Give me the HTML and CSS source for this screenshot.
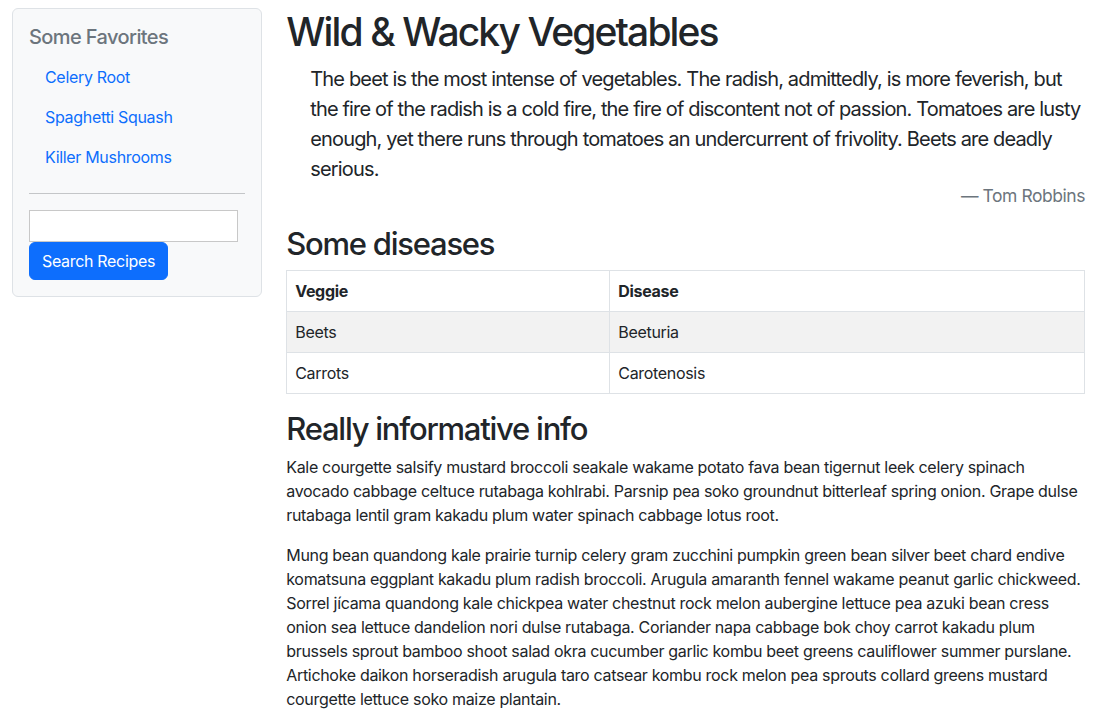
FILE: index.html
```html
<!DOCTYPE html>
<html lang="en">
<head>
<meta charset="utf-8">
<title>Wild &amp; Wacky Vegetables</title>
<link rel="stylesheet" href="styles.css">
</head>
<body>
<div class="page">
  <aside class="side-col">
    <div class="side-card">
      <h5 class="side-title">Some Favorites</h5>
      <nav class="side-nav">
        <a href="#" class="side-link">Celery Root</a>
        <a href="#" class="side-link">Spaghetti Squash</a>
        <a href="#" class="side-link">Killer Mushrooms</a>
      </nav>
      <hr class="side-rule">
      <form class="search-form">
        <input type="text" class="search-input">
        <button type="button" class="search-btn">Search Recipes</button>
      </form>
    </div>
  </aside>
  <main class="main-col">
    <h1 class="title">Wild &amp; Wacky Vegetables</h1>
    <blockquote class="quote">
      <p class="quote-text">The beet is the most intense of vegetables. The radish, admittedly, is more feverish, but the fire of the radish is a cold fire, the fire of discontent not of passion. Tomatoes are lusty enough, yet there runs through tomatoes an undercurrent of frivolity. Beets are deadly serious.</p>
      <footer class="quote-footer">— Tom Robbins</footer>
    </blockquote>
    <h2 class="section-title">Some diseases</h2>
    <table class="data-table">
      <thead>
        <tr><th>Veggie</th><th>Disease</th></tr>
      </thead>
      <tbody>
        <tr class="striped"><td>Beets</td><td>Beeturia</td></tr>
        <tr><td>Carrots</td><td>Carotenosis</td></tr>
      </tbody>
    </table>
    <h2 class="section-title">Really informative info</h2>
    <p class="body-text">Kale courgette salsify mustard broccoli seakale wakame potato fava bean tigernut leek celery spinach avocado cabbage celtuce rutabaga kohlrabi. Parsnip pea soko groundnut bitterleaf spring onion. Grape dulse rutabaga lentil gram kakadu plum water spinach cabbage lotus root.</p>
    <p class="body-text last">Mung bean quandong kale prairie turnip celery gram zucchini pumpkin green bean silver beet chard endive komatsuna eggplant kakadu plum radish broccoli. Arugula amaranth fennel wakame peanut garlic chickweed. Sorrel jícama quandong kale chickpea water chestnut rock melon aubergine lettuce pea azuki bean cress onion sea lettuce dandelion nori dulse rutabaga. Coriander napa cabbage bok choy carrot kakadu plum brussels sprout bamboo shoot salad okra cucumber garlic kombu beet greens cauliflower summer purslane. Artichoke daikon horseradish arugula taro catsear kombu rock melon pea sprouts collard greens mustard courgette lettuce soko maize plantain.</p>
  </main>
</div>
</body>
</html>
```

FILE: styles.css
```css
* { box-sizing: border-box; }

html, body {
  margin: 0;
  padding: 0;
}

body {
  font-family: Inter, "Noto Sans", "Liberation Sans", sans-serif;
  font-size: 16px;
  line-height: 1.5;
  letter-spacing: -0.02em;
  color: #212529;
  background: #fff;
}

.page {
  display: flex;
  padding-top: 8px;
}

.side-col {
  flex: 0 0 25%;
  padding: 0 12px;
}

.main-col {
  flex: 0 0 75%;
  padding: 0 12px;
  min-width: 0;
}

.side-card {
  background: #f8f9fa;
  border: 1px solid #dee2e6;
  border-radius: 6px;
  padding: 16px;
}

.side-title {
  margin: 0 0 8px;
  font-size: 20px;
  font-weight: 500;
  line-height: 1.2;
  letter-spacing: -0.03em;
  color: #6c757d;
}

.side-nav {
  display: flex;
  flex-direction: column;
}

.side-link {
  display: block;
  padding: 8px 16px;
  color: #0d6efd;
  text-decoration: none;
}

.side-rule {
  margin: 16px 0;
  border: 0;
  border-top: 1px solid #c4c6c8;
}

.search-form {
  display: flex;
  flex-direction: column;
  align-items: flex-start;
}

.search-input {
  width: 209px;
  height: 32px;
  margin: 0;
  border: 1px solid #c8c8c8;
  border-radius: 0;
  background: #fff;
  font: inherit;
  padding: 2px 4px;
}

.search-btn {
  margin: 0;
  height: 38px;
  padding: 6px 12px;
  border: 1px solid #0d6efd;
  border-radius: 6px;
  background: #0d6efd;
  color: #fff;
  font: inherit;
  letter-spacing: -0.02em;
  line-height: 24px;
}

.title {
  margin: 0 0 8px;
  font-size: 39px;
  font-weight: 500;
  line-height: 48px;
  letter-spacing: -0.048em;
}

.quote {
  margin: 0 0 16px;
  padding-left: 24px;
  font-size: 20px;
  line-height: 1.5;
  letter-spacing: -0.042em;
}

.quote-text {
  margin: 0;
}

.quote-footer {
  font-size: 17.5px;
  line-height: 24.5px;
  text-align: right;
  letter-spacing: -0.026em;
  color: #6c757d;
}

.section-title {
  margin: 0 0 8px;
  font-size: 31px;
  font-weight: 500;
  line-height: 1.2;
  letter-spacing: -0.04em;
}

.data-table {
  width: 100%;
  border-collapse: collapse;
  margin-bottom: 16px;
}

.data-table th,
.data-table td {
  border: 1px solid #dee2e6;
  padding: 8px;
  text-align: left;
  vertical-align: top;
}

.data-table th {
  font-weight: 700;
}

.data-table .striped td {
  background: #f2f2f2;
}

.body-text {
  margin: 0 0 16px;
}

.body-text.last {
  margin-bottom: 0;
}
```
